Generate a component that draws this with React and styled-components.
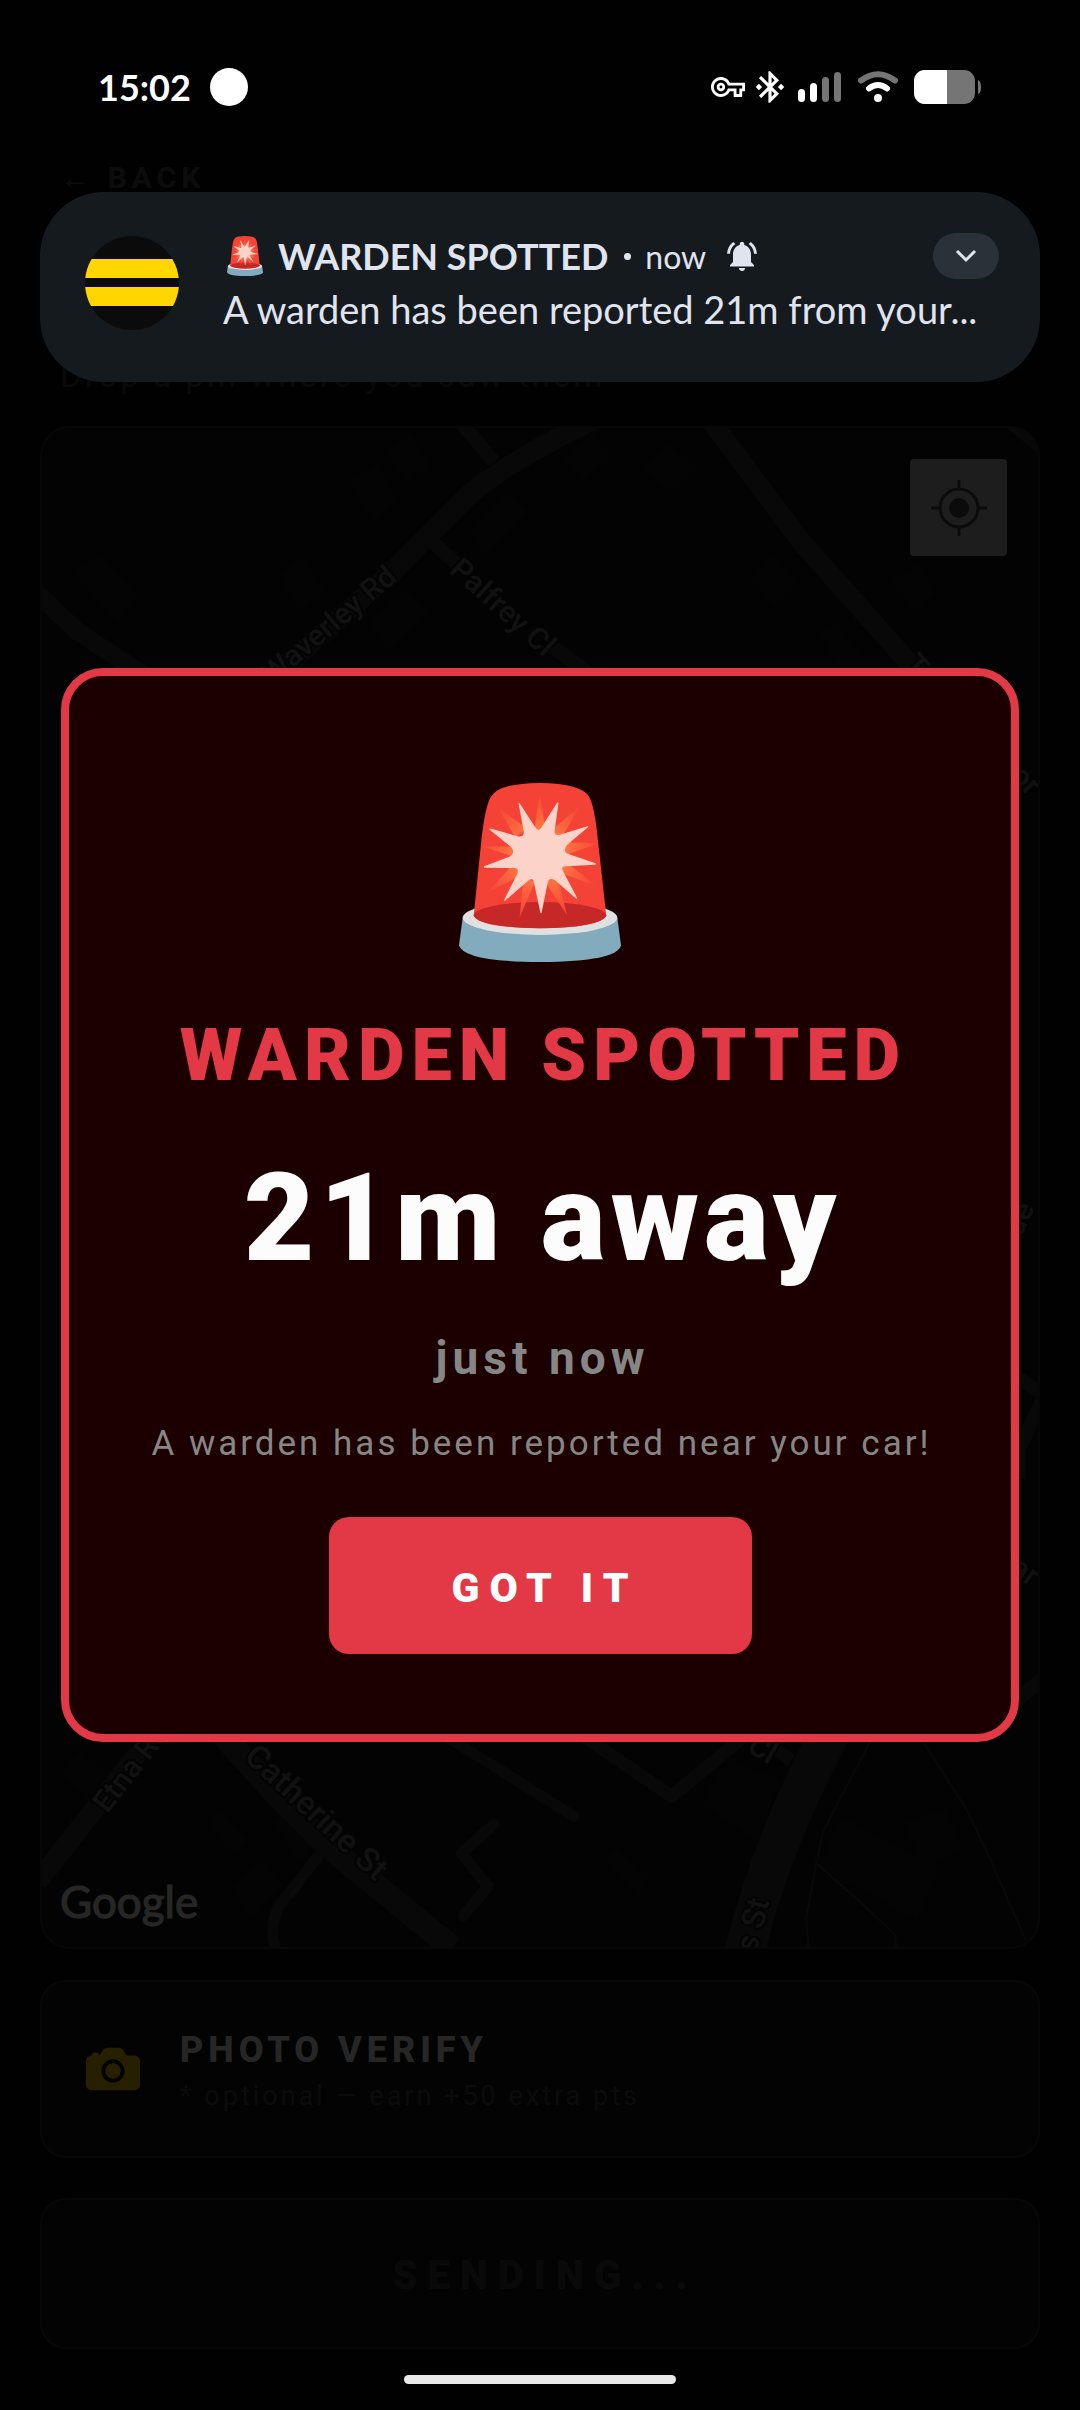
import React from 'react'
import styled, { createGlobalStyle } from 'styled-components'
import { IoCamera } from 'react-icons/io5'
import { MdBluetoothConnected, MdNotificationsActive, MdOutlineVpnKey } from 'react-icons/md'

const GlobalStyle = createGlobalStyle`
  * {
    box-sizing: border-box;
  }
  body {
    margin: 0;
    background: #000;
    font-family: Roboto, sans-serif;
  }
  button {
    border: 0;
    padding: 0;
    background: none;
    font-family: inherit;
    cursor: pointer;
  }
  h1, h2, p {
    margin: 0;
  }
`
const Screen = styled.div`
  position: relative;
  display: flex;
  flex-direction: column;
  min-height: 100vh;
  background: #080808;
`
const StatusBar = styled.header`
  position: relative;
  z-index: 2;
  display: flex;
  justify-content: space-between;
  align-items: center;
  height: 136px;
  padding: 38px 98px 0;
  color: #fff;
`
const StatusGroup = styled.div`
  display: flex;
  align-items: center;
  gap: ${props => props.$gap}px;
`
const Connections = styled.div`
  display: flex;
  align-items: center;
  gap: 6px;
  margin-right: -6px;
`
const Clock = styled.span`
  font-family: Lato, sans-serif;
  font-size: 36px;
  font-weight: 700;
  line-height: 40px;
`
const Dot = styled.span`
  width: 38px;
  height: 38px;
  border-radius: 50%;
  background: #fff;
`
const Page = styled.main`
  flex: 1;
  display: flex;
  flex-direction: column;
  padding: 22px 40px 0;
`
const Heading = styled.div`
  display: flex;
  flex-direction: column;
  align-items: flex-start;
  justify-content: space-between;
  height: 238px;
  margin-bottom: 30px;
  padding: 0 20px;
`
const BackButton = styled.button`
  color: #555;
  font-size: 30px;
  font-weight: 700;
  line-height: 40px;
  letter-spacing: 5px;
`
const Hint = styled.p`
  color: #404040;
  font-size: 33px;
  line-height: 40px;
  letter-spacing: 3px;
`
const MapCard = styled.section`
  position: relative;
  flex: 1;
  min-height: 400px;
  margin-bottom: 31px;
  border: 2px solid #2e2e2e;
  border-radius: 30px;
  background: #171717;
  overflow: hidden;
`
const MapDrawing = styled.svg`
  position: absolute;
  inset: 0;
  width: 100%;
  height: 100%;
  font-family: Roboto, sans-serif;
`
const LocateButton = styled.button`
  position: absolute;
  top: 31px;
  right: 31px;
  width: 97px;
  height: 97px;
  border-radius: 4px;
  background: #c4c4c4;
  display: flex;
  align-items: center;
  justify-content: center;
`
const MapBrand = styled.span`
  position: absolute;
  left: 18px;
  bottom: 18px;
  color: #fff;
  font-family: Lato, sans-serif;
  font-size: 44px;
  line-height: 56px;
  -webkit-text-stroke: 1px #fff;
`
const PhotoCard = styled.button`
  display: flex;
  align-items: center;
  gap: 36px;
  height: 178px;
  margin-bottom: 40px;
  padding: 0 40px;
  border: 2px solid #2e2e2e;
  border-radius: 26px;
  background: #141414;
  color: #ffd600;
  text-align: left;
`
const PhotoText = styled.span`
  display: flex;
  flex-direction: column;
  gap: 6px;
  padding-top: 4px;
`
const PhotoTitle = styled.span`
  color: #fff;
  font-size: 36px;
  font-weight: 800;
  line-height: 44px;
  letter-spacing: 5px;
`
const PhotoNote = styled.span`
  color: #4c4c4c;
  font-size: 27px;
  line-height: 36px;
  letter-spacing: 3px;
`
const SendButton = styled.button`
  height: 151px;
  padding: 4px 0 0 10px;
  border: 2px solid #2e2e2e;
  border-radius: 26px;
  background: #141414;
  color: #404040;
  font-size: 40px;
  font-weight: 900;
  letter-spacing: 10px;
`
const HomeArea = styled.footer`
  position: relative;
  z-index: 2;
  display: flex;
  justify-content: center;
  padding: 26px 0;
`
const HomeBar = styled.span`
  width: 272px;
  height: 9px;
  border-radius: 5px;
  background: #e9e9e9;
`
const Backdrop = styled.div`
  position: absolute;
  inset: 0;
  z-index: 1;
  display: flex;
  align-items: center;
  justify-content: center;
  padding: 0 61px;
  background: rgba(0, 0, 0, 0.85);
`
const Modal = styled.section`
  display: flex;
  flex-direction: column;
  align-items: center;
  width: 100%;
  padding: 107px 40px 80px;
  border: 8px solid #e33845;
  border-radius: 42px;
  background: #1c0000;
  text-align: center;
`
const ModalTitle = styled.h1`
  margin-top: 50px;
  padding-left: 7px;
  color: #e33845;
  font-size: 72px;
  font-weight: 900;
  line-height: 88px;
  letter-spacing: 7px;
`
const Distance = styled.h2`
  margin-top: 47px;
  padding-left: 5px;
  color: #fcfcfc;
  font-size: 122px;
  font-weight: 900;
  line-height: 144px;
  letter-spacing: 5px;
`
const Ago = styled.p`
  margin-top: 39px;
  padding-left: 5px;
  color: #868686;
  font-size: 46px;
  font-weight: 700;
  line-height: 56px;
  letter-spacing: 5px;
`
const Message = styled.p`
  margin-top: 36px;
  padding-left: 3px;
  color: #868686;
  font-size: 35px;
  line-height: 44px;
  letter-spacing: 3px;
`
const ConfirmButton = styled.button`
  width: 423px;
  height: 137px;
  margin-top: 51px;
  padding: 4px 0 0 10px;
  border-radius: 20px;
  background: #e33845;
  color: #fff;
  font-size: 41px;
  font-weight: 900;
  letter-spacing: 10px;
`
const Notification = styled.aside`
  position: absolute;
  z-index: 3;
  top: 192px;
  left: 40px;
  right: 40px;
  display: flex;
  align-items: center;
  gap: 44px;
  height: 190px;
  padding: 0 41px 8px 45px;
  border-radius: 64px;
  background: #151a1e;
  color: #e0e4ef;
  font-family: Lato, sans-serif;
`
const NotificationText = styled.div`
  flex: 1;
  min-width: 0;
`
const NotificationHead = styled.div`
  display: flex;
  align-items: center;
  height: 48px;
  padding-left: 4px;
`
const NotificationTitle = styled.strong`
  margin: 0 16px 0 15px;
  font-size: 36px;
  font-weight: 700;
`
const NotificationTime = styled.span`
  margin: 0 18px 0 14px;
  font-size: 32px;
`
const Bullet = styled.span`
  width: 7px;
  height: 7px;
  border-radius: 50%;
  background: #e0e4ef;
`
const NotificationBody = styled.p`
  margin-top: 4px;
  font-size: 38px;
  line-height: 50px;
  white-space: nowrap;
`
const ExpandButton = styled.button`
  display: flex;
  align-items: center;
  justify-content: center;
  width: 66px;
  height: 46px;
  margin-left: auto;
  border-radius: 23px;
  background: #2a3138;
`

const Siren = ({ width, height }) => (
  <svg width={width} height={height} viewBox="177 130 484 535" preserveAspectRatio="none" aria-hidden="true">
    <defs>
      <radialGradient id="rays" gradientUnits="userSpaceOnUse" cx="418" cy="345" r="190">
        <stop offset="0.4" stopColor="#ff7441" />
        <stop offset="1" stopColor="#f44336" />
      </radialGradient>
    </defs>
    <path d="M188 533 177 615Q190 664 419 665 650 664 661 615L650 533Z" fill="#82abbd" />
    <ellipse cx="419" cy="533" rx="231" ry="51" fill="#e0e0e0" />
    <path d="M221 525 245 290Q256 200 272 172 292 131 418 130 544 131 566 172 582 200 592 300L617 525Q600 563 419 564 238 563 221 525Z" fill="#f44336" />
    <ellipse cx="419" cy="525" rx="198" ry="39" fill="#c62828" />
    <path
      d="M418 160 400 285H438ZM537 200 455 270 480 300ZM592 310 480 306 485 350ZM586 437 490 360 470 395ZM500 525 434 425 470 405ZM358 532 370 410 404 425ZM262 457 345 365 365 405ZM246 320 350 320 345 352ZM293 203 345 292 380 265Z"
      fill="url(#rays)"
    />
    <path
      d="M357 192 402 262Q415 283 426 262L472 190 461 272Q459 290 477 287L561 261 500 312Q484 330 497 342L584 372 498 377Q476 376 487 396L528 474 465 419Q445 406 440 428L422 517 403 428Q400 408 383 420L314 480 353 402Q360 382 340 382L253 381 328 352Q350 340 334 320L270 268 355 292Q375 294 372 272Z"
      fill="#fcd3c9"
      stroke="#fcd3c9"
      strokeWidth="4"
      strokeLinejoin="round"
    />
  </svg>
)

const Signal = () => (
  <svg width="44" height="30" viewBox="0 0 44 30" fill="#fff" aria-hidden="true">
    <rect y="17" width="7" height="13" rx="3.5" />
    <rect x="12" y="11" width="7" height="19" rx="3.5" />
    <rect x="24" y="5" width="7" height="25" rx="3.5" fill="#757575" />
    <rect x="36" width="7" height="30" rx="3.5" fill="#757575" />
  </svg>
)

const Wifi = () => (
  <svg width="42" height="32" viewBox="0 0 42 32" fill="none" strokeWidth="6" strokeLinecap="round" aria-hidden="true">
    <path d="M4 9.500Q21-3 38 9.500" stroke="#757575" />
    <path d="M12 17.500Q21 10.500 30 17.500" stroke="#fff" />
    <circle cx="21" cy="27" r="4" fill="#fff" />
  </svg>
)

const Battery = () => (
  <svg width="68" height="34" viewBox="0 0 68 34" aria-hidden="true">
    <path d="M11 0H50A11 11 0 0 1 61 11V23A11 11 0 0 1 50 34H11A11 11 0 0 1 0 23V11A11 11 0 0 1 11 0Z" fill="#757575" />
    <path d="M11 0H33V34H11A11 11 0 0 1 0 23V11A11 11 0 0 1 11 0Z" fill="#fff" />
    <path d="M64 10Q67 11 67 17T64 24Z" fill="#757575" />
  </svg>
)

const BeeLogo = () => (
  <svg width="94" height="94" viewBox="0 0 94 94" aria-hidden="true">
    <clipPath id="logoClip">
      <circle cx="47" cy="47" r="47" />
    </clipPath>
    <g clipPath="url(#logoClip)">
      <rect width="94" height="94" fill="#0b0b0b" />
      <rect y="23" width="94" height="19" fill="#ffd600" />
      <rect y="51" width="94" height="19" fill="#ffd600" />
    </g>
  </svg>
)

const Crosshair = () => (
  <svg width="56" height="56" viewBox="0 0 56 56" aria-hidden="true">
    <circle cx="28" cy="28" r="10" fill="#4a4a4a" />
    <circle cx="28" cy="28" r="19" fill="none" stroke="#4a4a4a" strokeWidth="3" />
    <path d="M28 0V8M28 48V56M0 28H8M48 28H56" stroke="#4a4a4a" strokeWidth="3" />
  </svg>
)

const buildings = [
  'M385 450 410 432 430 462 408 480Z',
  'M350 480 378 462 398 500 372 520Z',
  'M278 575 300 555 325 590 300 610Z',
  'M470 530 510 490 528 510 485 555Z',
  'M370 620 405 590 430 612 388 650Z',
  'M70 570 98 555 138 590 118 620Z',
  'M562 455 592 432 612 455 582 480Z',
  'M642 465 668 442 698 465 672 490Z',
  'M750 575 772 552 798 582 775 605Z',
  'M892 580 918 562 938 590 915 608Z',
  'M820 635 838 622 860 650 842 665Z',
  'M60 1775 80 1752 105 1775 88 1800Z',
  'M205 1825 218 1812 248 1842 234 1858Z',
  'M270 1825 285 1810 318 1842 300 1862Z',
  'M232 1890 260 1862 282 1888 250 1922Z',
  'M702 1805 728 1760 782 1782 758 1842Z',
  'M842 1818 940 1870 918 1922 820 1868Z',
  'M905 1822 948 1812 962 1850 925 1870Z',
  'M605 1860 618 1850 650 1880 640 1895Z',
]

const MapView = () => (
  <MapDrawing viewBox="40 426 1000 1523" preserveAspectRatio="xMidYMid slice" aria-hidden="true">
    <g fill="#1d1d1d">
      {buildings.map(d => (
        <path key={d} d={d} />
      ))}
    </g>
    <g fill="none" stroke="#363636" strokeLinejoin="round">
      <path d="M610 410Q520 452 472 490L392 570 200 740" strokeWidth="20" />
      <path d="M462 422 494 460" strokeWidth="14" />
      <path d="M430 538 456 562M552 645 600 680" strokeWidth="14" />
      <path d="M36 592 76 630 140 672 180 710" strokeWidth="18" />
      <path d="M712 420 802 540 930 684" strokeWidth="20" />
      <path d="M1012 420 1044 446" strokeWidth="14" />
      <path d="M180 1700 36 1884" strokeWidth="20" />
      <path d="M200 1712 282 1803 324 1845 452 1950" strokeWidth="24" />
      <path d="M324 1850 278 1908Q268 1930 275 1950" strokeWidth="11" />
      <path d="M494 1826 461 1855 488 1888 463 1918" strokeWidth="11" strokeLinecap="round" />
      <path d="M440 1734 574 1818" strokeWidth="11" strokeLinecap="round" />
      <path d="M580 1735 672 1798 760 1725" strokeWidth="13" />
      <path d="M775 1750 792 1762" strokeWidth="13" />
      <path d="M850 1700Q775 1830 745 1955" strokeWidth="40" />
      <path d="M1008 1372 1044 1394M1044 1400 1020 1450V1480M1044 1680 1014 1705" strokeWidth="14" />
      <path
        d="M871 1743 824 1833 817 1865 807 1920 809 1950M817 1865 870 1912 896 1937 897 1950M924 1743 967 1810 991 1860 1027 1942"
        strokeWidth="2"
      />
    </g>
    <path d="M305 1878 302 1888 292 1900 289 1896 297 1885 294 1882Z" fill="#394750" />
    <g fill="#747474" fontSize="30" fontWeight="500" stroke="#171717" strokeWidth="4" paintOrder="stroke">
      <text transform="translate(398 578) rotate(-40)" textAnchor="end">Waverley Rd</text>
      <text transform="translate(448 570) rotate(42)">Palfrey Cl</text>
      <text transform="translate(904 664) rotate(48)">T</text>
      <text transform="translate(106 1816) rotate(-52)">Etna Rd</text>
      <text transform="translate(242 1760) rotate(43)" fontSize="33">Catherine St</text>
      <text transform="translate(770 1766) rotate(30)" textAnchor="end">Cl</text>
      <text transform="translate(770 1903) rotate(-76)" fontSize="32" textAnchor="end">s St</text>
      <text transform="translate(1036 1208) rotate(-65)" textAnchor="end">de</text>
      <text transform="translate(1030 796) rotate(45)" textAnchor="end">or</text>
      <text transform="translate(1032 1588) rotate(35)" textAnchor="end">lar</text>
    </g>
  </MapDrawing>
)

const App = () => {
  return (
    <>
      <GlobalStyle />
      <Screen>
        <StatusBar>
          <StatusGroup $gap={19}>
            <Clock>15:02</Clock>
            <Dot />
          </StatusGroup>
          <StatusGroup $gap={15}>
            <Connections>
              <MdOutlineVpnKey size={34} />
              <MdBluetoothConnected size={38} />
            </Connections>
            <Signal />
            <Wifi />
            <Battery />
          </StatusGroup>
        </StatusBar>

        <Page>
          <Heading>
            <BackButton type="button">← BACK</BackButton>
            <Hint>Drop a pin where you saw them</Hint>
          </Heading>
          <MapCard>
            <MapView />
            <LocateButton type="button" aria-label="My location">
              <Crosshair />
            </LocateButton>
            <MapBrand>Google</MapBrand>
          </MapCard>
          <PhotoCard type="button">
            <IoCamera size={62} />
            <PhotoText>
              <PhotoTitle>PHOTO VERIFY</PhotoTitle>
              <PhotoNote>* optional — earn +50 extra pts</PhotoNote>
            </PhotoText>
          </PhotoCard>
          <SendButton type="button">SENDING...</SendButton>
        </Page>

        <HomeArea>
          <HomeBar />
        </HomeArea>

        <Backdrop>
          <Modal role="dialog" aria-labelledby="alert-title">
            <Siren width={162} height={179} />
            <ModalTitle id="alert-title">WARDEN SPOTTED</ModalTitle>
            <Distance>21m away</Distance>
            <Ago>just now</Ago>
            <Message>A warden has been reported near your car!</Message>
            <ConfirmButton type="button">GOT IT</ConfirmButton>
          </Modal>
        </Backdrop>

        <Notification>
          <BeeLogo />
          <NotificationText>
            <NotificationHead>
              <Siren width={36} height={40} />
              <NotificationTitle>WARDEN SPOTTED</NotificationTitle>
              <Bullet />
              <NotificationTime>now</NotificationTime>
              <MdNotificationsActive size={36} />
              <ExpandButton type="button" aria-label="Expand">
                <svg width="22" height="14" viewBox="0 0 22 14" fill="none" stroke="#e0e4ef" strokeWidth="3" aria-hidden="true">
                  <path d="M2 2 11 11 20 2" />
                </svg>
              </ExpandButton>
            </NotificationHead>
            <NotificationBody>A warden has been reported 21m from your...</NotificationBody>
          </NotificationText>
        </Notification>
      </Screen>
    </>
  )
}

export default App
